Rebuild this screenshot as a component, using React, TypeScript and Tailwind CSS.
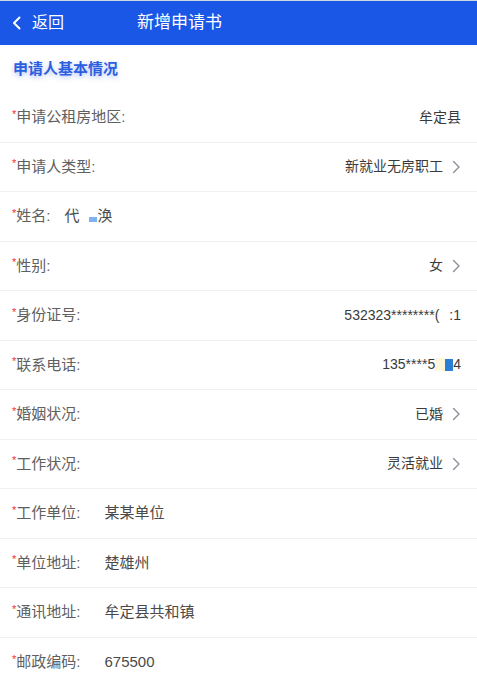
import React from 'react';

interface Field {
  label: string;
  value: React.ReactNode;
  align: 'left' | 'right';
  arrow?: boolean;
  gap?: string;
}

const ChevronRight = () => (
  <svg className="ml-[9px] h-[14px] w-[9px]" viewBox="0 0 9 14" fill="none">
    <path d="M1.5 1.5L7 7l-5.5 5.5" stroke="#8a8f99" strokeWidth={1.4} strokeLinecap="round" strokeLinejoin="round" />
  </svg>
);

const fields: Field[] = [
  { label: '申请公租房地区:', value: '牟定县', align: 'right' },
  { label: '申请人类型:', value: '新就业无房职工', align: 'right', arrow: true },
  {
    label: '姓名:',
    align: 'left',
    gap: 'ml-[14px]',
    value: (
      <span className="flex items-center">
        代
        <span className="ml-[10px] mt-[6px] h-[5px] w-[8px] bg-[#7fb2f0]" />
        <span>涣</span>
      </span>
    ),
  },
  { label: '性别:', value: '女', align: 'right', arrow: true },
  {
    label: '身份证号:',
    align: 'right',
    value: (
      <span className="flex items-center">
        532323********(<span className="w-[10px]" />:1
      </span>
    ),
  },
  {
    label: '联系电话:',
    align: 'right',
    value: (
      <span className="flex items-center">
        135****5
        <span className="h-[13px] w-[10px] bg-[#fdf6d8]" />
        <span className="h-[12px] w-[8px] bg-[#2a7fd4]" />4
      </span>
    ),
  },
  { label: '婚姻状况:', value: '已婚', align: 'right', arrow: true },
  { label: '工作状况:', value: '灵活就业', align: 'right', arrow: true },
  { label: '工作单位:', value: '某某单位', align: 'left' },
  { label: '单位地址:', value: '楚雄州', align: 'left' },
  { label: '通讯地址:', value: '牟定县共和镇', align: 'left' },
  { label: '邮政编码:', value: '675500', align: 'left' },
];

export default function App() {
  return (
    <div
      className="min-h-[685px] w-[477px] bg-white"
      style={{ fontFamily: '"Liberation Sans", "Noto Sans CJK SC", sans-serif' }}
    >
      {/* Header */}
      <div className="flex h-[45px] items-center border-t border-[#cfd6e6] bg-[#1a57e6] text-white">
        <svg className="ml-[12px] h-[14px] w-[9px]" viewBox="0 0 9 14" fill="none">
          <path d="M7.5 1.5L2 7l5.5 5.5" stroke="white" strokeWidth={2} strokeLinecap="round" strokeLinejoin="round" />
        </svg>
        <span className="ml-[11px] text-[16px]">返回</span>
        <span className="ml-[73px] text-[17px]">新增申请书</span>
      </div>

      {/* Section title */}
      <div className="flex h-[48px] items-center pl-[13px]">
        <span
          className="text-[15px] font-bold text-[#2c5fe0]"
          style={{ textShadow: '0 2px 5px rgba(40, 95, 225, 0.35)' }}
        >
          申请人基本情况
        </span>
      </div>

      {/* Fields */}
      <div>
        {fields.map((f, i) => (
          <div
            key={i}
            className={`flex h-[49.5px] items-center pl-[12px] pr-[16px] text-[15px] ${
              i < fields.length - 1 ? 'border-b border-[#f0f0f0]' : ''
            }`}
          >
            <span className="mb-[6px] text-[11px] leading-none text-[#f03030]">*</span>
            <span className="text-[#606060]">{f.label}</span>
            {f.align === 'left' ? (
              <span className={`${f.gap ?? 'ml-[24px]'} text-[#4a4a4a]`}>{f.value}</span>
            ) : (
              <span className="ml-auto flex items-center text-[14px] text-[#3a3a3a]">
                {f.value}
                {f.arrow && <ChevronRight />}
              </span>
            )}
          </div>
        ))}
      </div>
    </div>
  );
}
